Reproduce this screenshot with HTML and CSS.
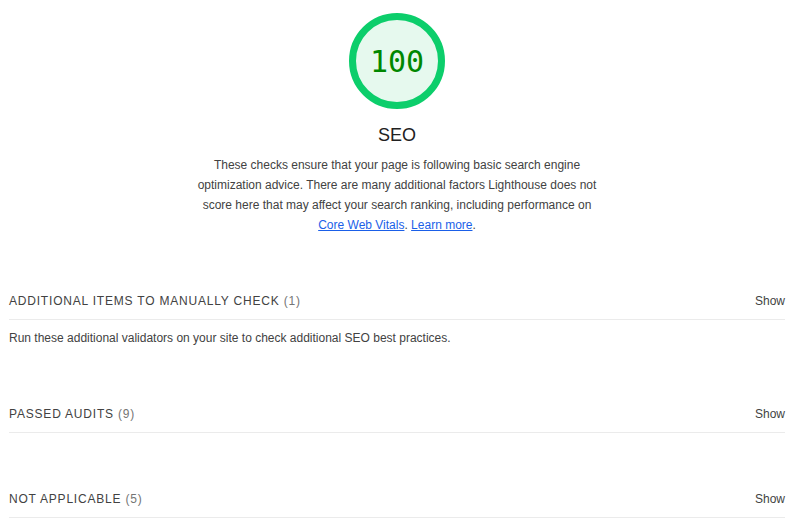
FILE: index.html
```html
<!DOCTYPE html>
<html>
<head>
<meta charset="utf-8">
<link rel="stylesheet" href="styles.css">
</head>
<body>
<div class="report">
  <div class="header">
    <div class="gauge">
      <svg class="gauge-svg" viewBox="0 0 100 100" width="100" height="100">
        <circle cx="50" cy="50" r="44.5" fill="#e6f9ee" stroke="#0cce6b" stroke-width="7"/>
      </svg>
      <div class="gauge-value">100</div>
    </div>
    <div class="title">SEO</div>
    <div class="desc">These checks ensure that your page is following basic search engine optimization advice. There are many additional factors Lighthouse does not score here that may affect your search ranking, including performance on <a href="#">Core Web Vitals</a>. <a href="#">Learn more</a>.</div>
  </div>

  <div class="group">
    <div class="group-head">
      <span class="group-title">Additional items to manually check <span class="count">(1)</span></span>
      <span class="show">Show</span>
    </div>
    <div class="group-desc">Run these additional validators on your site to check additional SEO best practices.</div>
  </div>

  <div class="group">
    <div class="group-head">
      <span class="group-title">Passed audits <span class="count">(9)</span></span>
      <span class="show">Show</span>
    </div>
  </div>

  <div class="group">
    <div class="group-head">
      <span class="group-title">Not applicable <span class="count">(5)</span></span>
      <span class="show">Show</span>
    </div>
  </div>
</div>
</body>
</html>
```
FILE: styles.css
```css
html, body {
  margin: 0;
  padding: 0;
  background: #fff;
}
body {
  font-family: "Liberation Sans", Arial, sans-serif;
  color: #212121;
}
.report {
  padding: 11px 8px 0 9px;
}
.header {
  display: flex;
  flex-direction: column;
  align-items: center;
}
.gauge {
  position: relative;
  width: 100px;
  height: 100px;
}
.gauge-svg {
  width: 100px;
  height: 100px;
  display: block;
}
.gauge-value {
  position: absolute;
  inset: 0;
  display: flex;
  align-items: center;
  justify-content: center;
  font-family: "DejaVu Sans Mono", monospace;
  font-size: 30px;
  color: #008800;
}
.title {
  margin-top: 12px;
  font-size: 18px;
  line-height: 24px;
  color: #212121;
}
.desc {
  margin-top: 8px;
  width: 400px;
  text-align: center;
  font-size: 12px;
  line-height: 20px;
  color: #424242;
}
.desc a {
  color: #1a5fe8;
}
.group {
  margin-top: 56px;
}
.group-head {
  display: flex;
  justify-content: space-between;
  align-items: center;
  line-height: 20px;
  padding-bottom: 8px;
  border-bottom: 1px solid #ebebeb;
  font-size: 12px;
}
.group-title {
  text-transform: uppercase;
  letter-spacing: 0.8px;
  color: #424242;
}
.count {
  color: #757575;
}
.show {
  color: #424242;
}
.group-desc {
  font-size: 12px;
  line-height: 20px;
  margin-top: 8px;
  color: #424242;
}
```
